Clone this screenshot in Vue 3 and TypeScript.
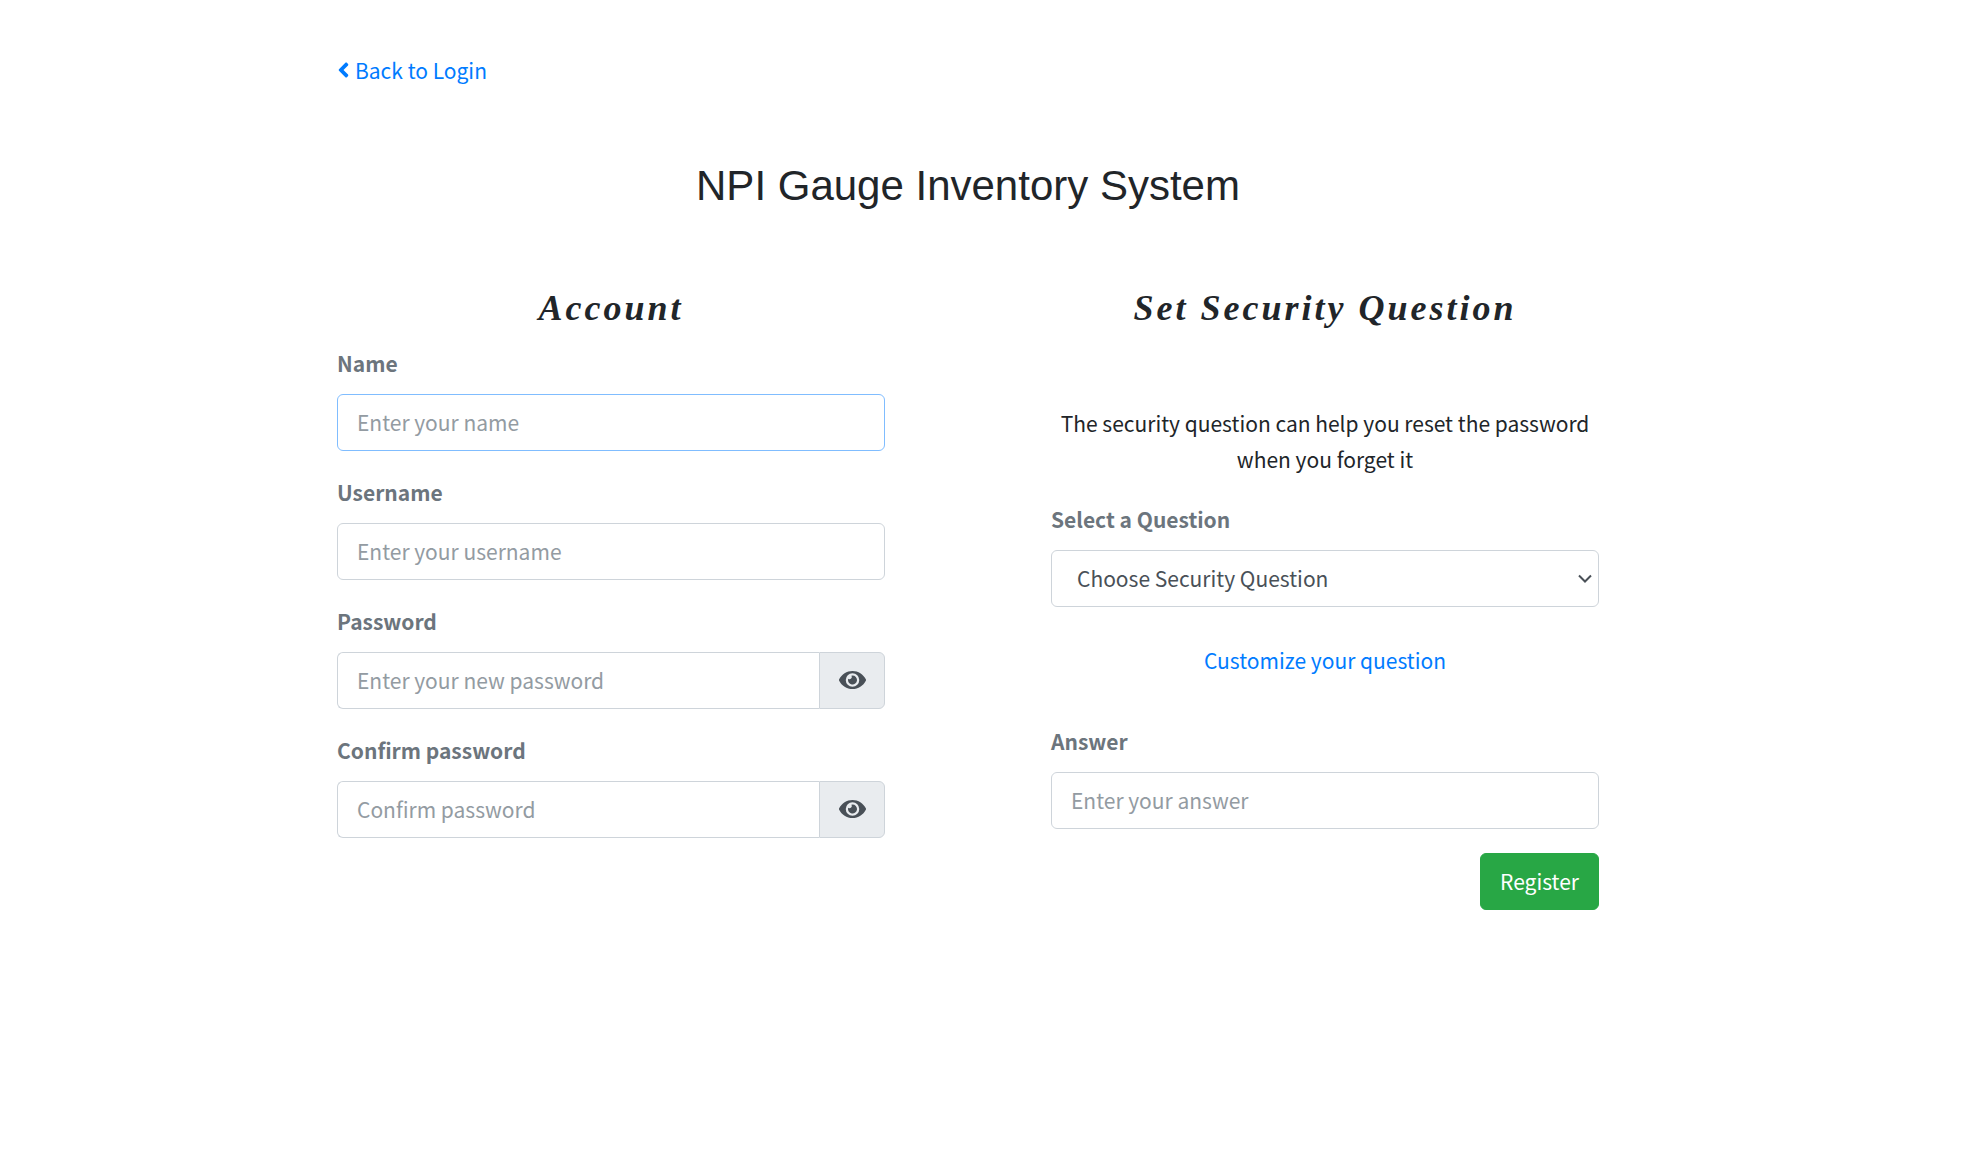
<script setup lang="ts">
import { reactive, ref } from 'vue'

interface AccountField {
  id: 'name' | 'username' | 'password' | 'confirm'
  label: string
  placeholder: string
  secret: boolean
}

const fields: AccountField[] = [
  { id: 'name', label: 'Name', placeholder: 'Enter your name', secret: false },
  { id: 'username', label: 'Username', placeholder: 'Enter your username', secret: false },
  { id: 'password', label: 'Password', placeholder: 'Enter your new password', secret: true },
  { id: 'confirm', label: 'Confirm password', placeholder: 'Confirm password', secret: true },
]

const form = reactive({ name: '', username: '', password: '', confirm: '', answer: '' })
const visible = reactive({ name: true, username: true, password: false, confirm: false })
const question = ref('')
</script>

<template>
  <main class="page">
    <div class="container">
      <a class="back" href="#login">
        <svg class="angle" viewBox="0 0 256 512" aria-hidden="true">
          <path fill="currentColor" d="M31.7 239l136-136c9.4-9.4 24.6-9.4 33.9 0l22.6 22.6c9.4 9.4 9.4 24.6 0 33.9L127.9 256l96.4 96.4c9.4 9.4 9.4 24.6 0 33.9L201.7 409c-9.4 9.4-24.6 9.4-33.9 0l-136-136c-9.5-9.4-9.5-24.6-.1-34z" />
        </svg>
        <span>Back to Login</span>
      </a>

      <h1 class="title">NPI Gauge Inventory System</h1>

      <form class="columns" @submit.prevent>
        <section>
          <h2 class="heading">Account</h2>
          <div v-for="field in fields" :key="field.id" class="group">
            <label class="label" :for="field.id">{{ field.label }}</label>
            <div class="input-row">
              <input
                :id="field.id"
                v-model="form[field.id]"
                class="control"
                :class="{ active: field.id === 'name', joined: field.secret }"
                :type="visible[field.id] ? 'text' : 'password'"
                :placeholder="field.placeholder"
              />
              <button
                v-if="field.secret"
                class="toggle"
                type="button"
                aria-label="Show or hide password"
                @click="visible[field.id] = !visible[field.id]"
              >
                <svg class="eye" viewBox="0 0 576 512" aria-hidden="true">
                  <path fill="currentColor" d="M572.52 241.4C518.29 135.59 410.93 64 288 64S57.68 135.64 3.48 241.41a32.35 32.35 0 0 0 0 29.19C57.71 376.41 165.07 448 288 448s230.32-71.64 284.52-177.41a32.35 32.35 0 0 0 0-29.19zM288 400a144 144 0 1 1 144-144 143.93 143.93 0 0 1-144 144zm0-240a95.31 95.31 0 0 0-25.31 3.79 47.85 47.85 0 0 1-66.9 66.9A95.78 95.78 0 1 0 288 160z" />
                </svg>
              </button>
            </div>
          </div>
        </section>

        <section>
          <h2 class="heading">Set Security Question</h2>
          <p class="hint">The security question can help you reset the password when you forget it</p>
          <div class="group">
            <label class="label" for="question">Select a Question</label>
            <div class="select-wrap">
              <select id="question" v-model="question" class="control select">
                <option value="">Choose Security Question</option>
              </select>
              <svg class="caret" viewBox="0 0 14 10" aria-hidden="true">
                <path d="M1 1.5L7 7.5L13 1.5" fill="none" stroke="currentColor" stroke-width="2" />
              </svg>
            </div>
          </div>
          <p class="customize"><a href="#customize">Customize your question</a></p>
          <div class="group">
            <label class="label" for="answer">Answer</label>
            <input id="answer" v-model="form.answer" class="control" type="text" placeholder="Enter your answer" />
          </div>
          <div class="actions">
            <button class="register" type="submit">Register</button>
          </div>
        </section>
      </form>
    </div>
  </main>
</template>

<style>
body {
  margin: 0;
  background: #fff;
}
</style>

<style scoped>
* {
  box-sizing: border-box;
}

.page {
  padding: 52px 41px 48px 0;
  color: #212529;
  font-family: "Source Sans Pro", "Noto Sans CJK SC", sans-serif;
  font-size: 21px;
  line-height: 36px;
}

.container {
  max-width: 1262px;
  margin: 0 auto;
}

a {
  color: #007bff;
  text-decoration: none;
}

.back {
  display: inline-flex;
  align-items: center;
  gap: 5px;
}

.angle {
  width: 13px;
  height: 24px;
}

.title {
  margin: 70px 0 72px;
  font-family: "Liberation Sans", Arial, sans-serif;
  font-size: 42px;
  font-weight: 400;
  line-height: 50px;
  text-align: center;
}

.columns {
  display: grid;
  grid-template-columns: 1fr 1fr;
  column-gap: 166px;
}

.heading {
  margin: 0 0 12px;
  font-family: "Brush Script MT", "Liberation Serif", cursive;
  font-size: 36px;
  font-style: italic;
  font-weight: 700;
  letter-spacing: 3px;
  line-height: 50px;
  text-align: center;
}

.group {
  margin-bottom: 23px;
}

.label {
  display: block;
  margin-bottom: 13px;
  color: #6c757d;
  font-weight: 700;
}

.input-row {
  display: flex;
}

.control {
  display: block;
  flex: 1;
  width: 100%;
  min-width: 0;
  height: 57px;
  margin: 0;
  padding: 0 19px 2px;
  border: 1px solid #ced4da;
  border-radius: 6px;
  outline: 0;
  background: #fff;
  color: #495057;
  font: inherit;
}

.control::placeholder {
  color: #939ba2;
  opacity: 1;
}

.control.active,
.control:focus {
  border-color: #80bdff;
}

.control.joined {
  border-right: 0;
  border-radius: 6px 0 0 6px;
}

.toggle {
  display: flex;
  align-items: center;
  justify-content: center;
  width: 66px;
  padding: 0 0 2px;
  border: 1px solid #ced4da;
  border-radius: 0 6px 6px 0;
  background: #e9ecef;
  color: #495057;
}

.eye {
  width: 27px;
  height: 24px;
}

.hint {
  margin: 72px 0 24px;
  text-align: center;
}

.select-wrap {
  display: grid;
  align-items: center;
}

.select-wrap > * {
  grid-area: 1 / 1;
}

.select {
  padding-left: 25px;
  appearance: none;
}

.caret {
  justify-self: end;
  width: 14px;
  height: 10px;
  margin-right: 7px;
  color: #495057;
  pointer-events: none;
}

.customize {
  margin: 35px 0 45px;
  text-align: center;
}

.actions {
  display: flex;
  justify-content: flex-end;
  margin-top: 24px;
}

.register {
  height: 57px;
  padding: 0 19px 2px;
  border: 1px solid #28a745;
  border-radius: 6px;
  background: #28a745;
  color: #fff;
  font: inherit;
}

@media (max-width: 1000px) {
  .page {
    padding: 24px;
  }

  .columns {
    grid-template-columns: 1fr;
    row-gap: 48px;
  }
}
</style>
